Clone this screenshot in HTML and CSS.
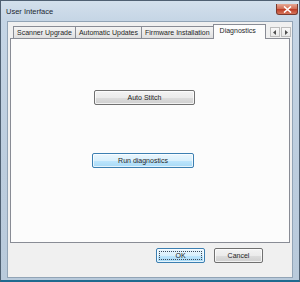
FILE: index.html
```html
<!DOCTYPE html>
<html lang="en">
<head>
  <meta charset="UTF-8">
  <title>User Interface</title>
  <link rel="stylesheet" href="styles.css">
</head>
<body>
  <div class="window">
    <div class="titlebar">
      <span class="title">User Interface</span>
      <span class="close">
        <svg width="9" height="7" viewBox="0 0 9 7"><path d="M1 0.5 L8 6.5 M8 0.5 L1 6.5" stroke="#fff" stroke-width="1.6"/></svg>
      </span>
    </div>
    <div class="client">
      <div class="tabs">
        <span class="tab">Scanner Upgrade</span>
        <span class="tab">Automatic Updates</span>
        <span class="tab">Firmware Installation</span>
        <span class="tab active">Diagnostics</span>
        <span class="scroll">
          <span class="arrow"><svg width="4" height="5" viewBox="0 0 4 5"><path d="M3 0 L0 2.5 L3 5 Z" fill="#4d4d4d"/></svg></span>
          <span class="arrow"><svg width="4" height="5" viewBox="0 0 4 5"><path d="M1 0 L4 2.5 L1 5 Z" fill="#4d4d4d"/></svg></span>
        </span>
      </div>
      <div class="panel">
        <button class="btn auto">Auto Stitch</button>
        <button class="btn hot run">Run diagnostics</button>
      </div>
      <div class="actions">
        <button class="btn hot ok"><span class="focus">OK</span></button>
        <button class="btn cancel">Cancel</button>
      </div>
    </div>
  </div>
</body>
</html>
```

FILE: styles.css
```css
* {
  margin: 0;
  padding: 0;
  box-sizing: border-box;
}

body {
  font-family: "Liberation Sans", Arial, sans-serif;
  font-size: 7px;
  color: #1e1e1e;
  background: #fff;
}

.window {
  width: 300px;
  height: 282px;
  display: flex;
  flex-direction: column;
  border: 1px solid #4f6072;
  border-bottom: 2px solid #1f6a8f;
  background: linear-gradient(#d3e0ec, #c5d5e5 20px, #bccdde 60%, #b9cadb);
  padding: 0 6px 2px 6px;
}

.titlebar {
  height: 20px;
  display: flex;
  justify-content: space-between;
  align-items: flex-start;
}

.title {
  font-size: 7.5px;
  color: #1c2733;
  margin-top: 6px;
  margin-left: -1px;
}

.close {
  width: 22px;
  height: 11px;
  margin-top: 3px;
  margin-right: -5px;
  border: 1px solid #7a3a2e;
  border-top: none;
  border-radius: 0 0 3px 3px;
  background: linear-gradient(#e6a894, #d06a52 50%, #bd3a24 51%, #d5755a);
  display: flex;
  justify-content: center;
  align-items: center;
}

.client {
  flex: 1;
  background: #f0f0f0;
  border: 1px solid #92a4b6;
  padding: 1px 2px 0 1px;
  display: flex;
  flex-direction: column;
}

.tabs {
  height: 15px;
  display: flex;
  align-items: flex-end;
  padding-left: 4px;
}

.tab {
  height: 12px;
  padding: 0 3px;
  border: 1px solid #898c95;
  border-bottom: none;
  border-right: none;
  background: linear-gradient(#f4f4f4, #ebebeb 50%, #dfdfdf);
  display: flex;
  align-items: center;
  white-space: nowrap;
}

.tab.active {
  height: 15px;
  margin-bottom: -1px;
  padding: 0 9px 3px 6px;
  border-right: 1px solid #898c95;
  background: #fcfcfc;
  position: relative;
  z-index: 1;
}

.scroll {
  display: flex;
  gap: 1px;
  margin-left: 4px;
  margin-bottom: 1px;
}

.arrow {
  width: 10px;
  height: 10px;
  border: 1px solid #bcbcbc;
  background: linear-gradient(#f8f8f8, #e8e8e8);
  display: flex;
  justify-content: center;
  align-items: center;
}

.panel {
  height: 205px;
  margin-left: 1px;
  border: 1px solid #898c95;
  background: #fcfcfc;
  display: flex;
  flex-direction: column;
  align-items: flex-start;
}

.btn {
  font-family: "Liberation Sans", Arial, sans-serif;
  font-size: 7px;
  color: #1e1e1e;
  height: 15px;
  border: 1px solid #707070;
  border-radius: 2px;
  background: linear-gradient(#f3f3f3, #ebebeb 50%, #dddddd 51%, #cfcfcf);
  box-shadow: inset 0 0 0 1px rgba(255, 255, 255, 0.7);
}

.btn.hot {
  border-color: #3c7fb1;
  background: linear-gradient(#eaf6fd, #d9f0fc 50%, #bee6fd 51%, #a7d9f5);
}

.auto {
  width: 101px;
  margin-top: 51px;
  margin-left: 83px;
}

.run {
  width: 102px;
  margin-top: 48px;
  margin-left: 81px;
}

.actions {
  display: flex;
  justify-content: flex-end;
  gap: 9px;
  padding-top: 5px;
  padding-right: 27px;
}

.ok,
.cancel {
  width: 49px;
  height: 15px;
}

.ok {
  padding: 2px;
}

.focus {
  display: flex;
  justify-content: center;
  align-items: center;
  height: 100%;
  border: 1px dotted #3a4a5a;
}
```
